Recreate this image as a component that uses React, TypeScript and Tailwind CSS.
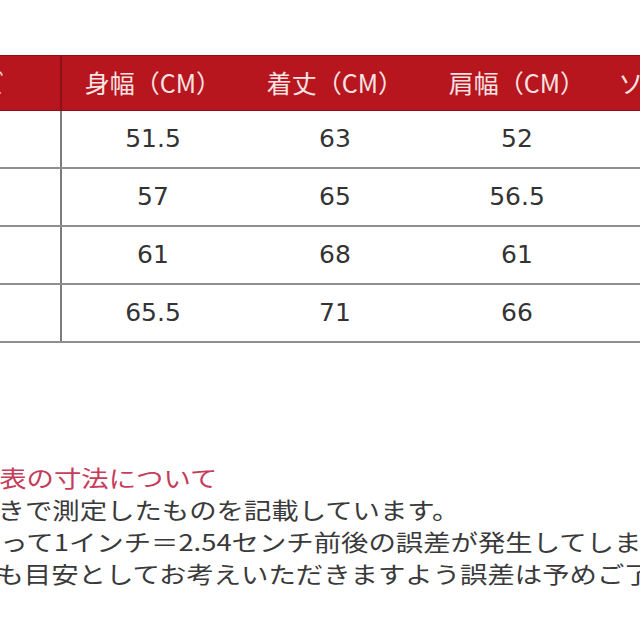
import * as React from "react";

const headers = ["サイズ", "身幅（CM）", "着丈（CM）", "肩幅（CM）", "ソデ丈（CM）"];
const rows = [
  ["S", "51.5", "63", "52", "60"],
  ["M", "57", "65", "56.5", "61"],
  ["L", "61", "68", "61", "62"],
  ["XL", "65.5", "71", "66", "63"],
];

const notes = [
  { text: "サイズ表の寸法について", cls: "-ml-[69px] text-[#c53d5b]" },
  { text: "平置きで測定したものを記載しています。", cls: "-ml-[48px]" },
  { text: "によって1インチ＝2.54センチ前後の誤差が発生してしまいます。", cls: "-ml-[45px]" },
  { text: "あくまでも目安としてお考えいただきますよう誤差は予めご了承ください。", cls: "-ml-[95px]" },
];

function App() {
  return (
    <div className="w-[640px] h-[640px] overflow-hidden bg-white relative">
      <div className="mt-[55px] -ml-[120px] w-[910px]">
        {/* header band */}
        <div className="grid grid-cols-[182px_182px_182px_182px_182px] h-[56px] bg-[#b7161f] border-y border-[#8e1016]">
          {headers.map((h, i) => (
            <div
              key={h}
              className={
                "flex items-center justify-center text-[25px] text-[#fae3e3] font-['Noto_Sans_CJK_JP',sans-serif] " +
                (i === 0 ? "pr-[6px] border-r-2 border-[#8a1117]" : "")
              }
            >
              {h}
            </div>
          ))}
        </div>
        {rows.map((r, ri) => (
          <div
            key={ri}
            className="grid grid-cols-[182px_182px_182px_182px_182px] h-[58px] border-b-2 border-[#8e8e8e]"
          >
            {r.map((c, ci) => (
              <div
                key={ci}
                className={
                  "flex items-center justify-center text-[25px] text-[#333] font-['DejaVu_Sans',sans-serif] " +
                  (ci === 0 ? "border-r-2 border-[#7c7c7c]" : "")
                }
              >
                {c}
              </div>
            ))}
          </div>
        ))}
      </div>

      <div className="mt-[118px] origin-left scale-x-[1.19] text-[23px] leading-[32px] text-[#3a3a3a] font-['Noto_Sans_CJK_JP',sans-serif]">
        {notes.map((n) => (
          <div key={n.text} className={"whitespace-nowrap " + n.cls}>
            {n.text}
          </div>
        ))}
      </div>
    </div>
  );
}

export default App;
